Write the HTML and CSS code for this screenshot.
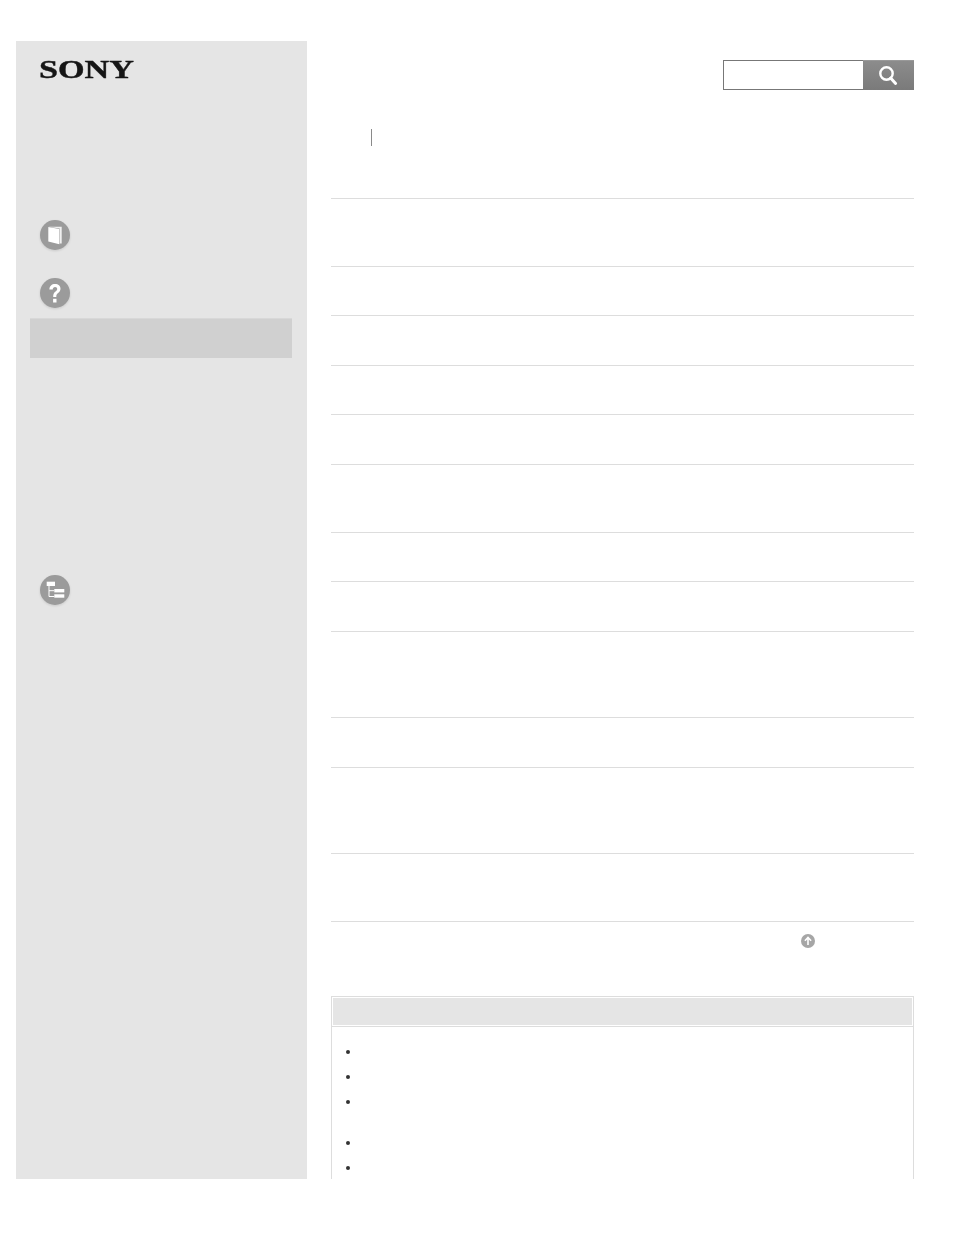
FILE: index.html
```
<!DOCTYPE html>
<html lang="en">
<head>
<meta charset="utf-8">
<title>Help Guide</title>
<link rel="stylesheet" href="styles.css">
</head>
<body>
<div class="page">
  <aside class="sidebar">
    <div class="logo"><span class="logo-text">SONY</span></div>
    <div class="nav-icon nav-book">
      <svg width="32" height="32" viewBox="0 0 32 32"><circle cx="16" cy="16" r="15" fill="#9b9b9b"/><path d="M9.3 7.7h13.4v16.8h-2V9.6z" fill="#fff" opacity=".85"/><path d="M9.3 8l11 2v15.2L9.3 22.6z" fill="#fff"/></svg>
    </div>
    <div class="nav-icon nav-help">
      <svg width="32" height="32" viewBox="0 0 32 32"><circle cx="16" cy="16" r="15" fill="#9b9b9b"/><path d="M10.4 12.4c.1-3.4 2.4-5.4 5.6-5.4 3.3 0 5.5 1.9 5.5 4.8 0 2-1.1 3.2-2.4 4.2-1.3 1-1.8 1.7-1.8 4h-3.1c-.1-3 .7-4.2 2.1-5.3 1.1-.9 1.9-1.5 1.9-2.7 0-1.1-.9-1.9-2.1-1.9-1.4 0-2.3.9-2.4 2.5z" fill="#fff"/><rect x="14.1" y="21.8" width="3.4" height="3.7" fill="#fff"/></svg>
    </div>
    <div class="nav-band"></div>
    <div class="nav-icon nav-tree">
      <svg width="32" height="32" viewBox="0 0 32 32"><circle cx="16" cy="16" r="15" fill="#9b9b9b"/><rect x="7.7" y="7.7" width="8.3" height="4.3" fill="#fff"/><path d="M10 12v10.5h5.3M10 16.7h5.3" stroke="#fff" fill="none"/><rect x="15.3" y="15" width="10" height="3.4" fill="#fff"/><rect x="15.3" y="20.3" width="10" height="3.4" fill="#fff"/></svg>
    </div>
  </aside>
  <main class="content">
    <div class="search">
      <div class="search-input"></div>
      <div class="search-button">
        <svg width="22" height="22" viewBox="0 0 22 22"><circle cx="8.5" cy="8.5" r="6.2" fill="none" stroke="#fff" stroke-width="2.4"/><path d="M12.6 13l5 5.4" stroke="#fff" stroke-width="3" stroke-linecap="round"/></svg>
      </div>
    </div>
    <div class="crumbs"><span class="crumb-sep"></span></div>
    <div class="rows">
      <div class="row row-2"></div>
      <div class="row row-1"></div>
      <div class="row row-1"></div>
      <div class="row row-1"></div>
      <div class="row row-1"></div>
      <div class="row row-2"></div>
      <div class="row row-1"></div>
      <div class="row row-1"></div>
      <div class="row row-3"></div>
      <div class="row row-1"></div>
      <div class="row row-3"></div>
      <div class="row row-2"></div>
    </div>
    <div class="top-link">
      <svg width="14" height="14" viewBox="0 0 14 14"><circle cx="7" cy="7" r="7" fill="#a6a6a6"/><path d="M7 11V3.8M3.9 6.8L7 3.5l3.1 3.3" fill="none" stroke="#fff" stroke-width="1.6"/></svg>
    </div>
    <section class="note">
      <div class="note-head"></div>
      <div class="note-list">
        <div class="bullet"></div>
        <div class="bullet"></div>
        <div class="bullet bullet-tall"></div>
        <div class="bullet"></div>
        <div class="bullet"></div>
      </div>
    </section>
  </main>
</div>
</body>
</html>
```

FILE: styles.css
```
html, body {
  margin: 0;
  padding: 0;
  background: #fff;
  font-family: "Liberation Sans", Arial, sans-serif;
}
.page {
  display: flex;
  align-items: stretch;
  height: 1138px;
  margin: 41px 0 0 16px;
  width: 898px;
  overflow: hidden;
}
.sidebar {
  display: flex;
  flex-direction: column;
  flex: 0 0 291px;
  background: #e5e5e5;
  padding: 17px 15px 0 14px;
  box-sizing: border-box;
}
.logo {
  height: 24px;
  margin-left: 9px;
  line-height: 24px;
}
.logo-text {
  display: inline-block;
  font-family: "Liberation Serif", "Times New Roman", serif;
  font-weight: 700;
  font-size: 25px;
  color: #151515;
  -webkit-text-stroke: .35px #151515;
  transform: scaleX(1.368);
  transform-origin: left center;
}
.nav-icon {
  height: 32px;
  margin-left: 9px;
}
.nav-icon svg {
  display: block;
  filter: drop-shadow(0 1px 1px rgba(0, 0, 0, .12));
}
.nav-book { margin-top: 137px; }
.nav-help { margin-top: 26px; }
.nav-band {
  height: 40px;
  margin-top: 9px;
  background: #d0d0d0;
  border-top: 1px solid #d8d8d8;
  box-sizing: border-box;
}
.nav-tree { margin-top: 216px; }
.content {
  flex: 0 0 583px;
  margin-left: 24px;
  padding-top: 19px;
  box-sizing: border-box;
}
.search {
  display: flex;
  justify-content: flex-end;
  height: 30px;
}
.search-input {
  width: 140px;
  background: #fff;
  border: 1px solid #777;
  border-right: 0;
  box-sizing: border-box;
}
.search-button {
  display: flex;
  align-items: center;
  justify-content: center;
  width: 51px;
  background: linear-gradient(#8c8c8c, #7a7a7a);
  border-top: 1px solid #999;
  box-sizing: border-box;
}
.crumbs {
  height: 18px;
  margin-top: 39px;
  padding-left: 40px;
}
.crumb-sep {
  display: block;
  width: 1px;
  height: 17px;
  background: #8a8a8a;
}
.rows {
  margin-top: 51px;
  border-top: 1px solid #ddd;
}
.row {
  border-bottom: 1px solid #ddd;
  box-sizing: border-box;
}
.row-1 { height: 49.49px; }
.row-2 { height: 68px; }
.row-3 { height: 86.2px; }
.top-link {
  display: flex;
  justify-content: flex-end;
  height: 74px;
  padding: 12px 99px 0 0;
  box-sizing: border-box;
}
.note {
  border: 1px solid #ddd;
  border-bottom: 0;
  padding: 1px 1px 0;
  height: 200px;
  box-sizing: border-box;
}
.note-head {
  height: 27px;
  background: #e5e5e5;
  margin-bottom: 1px;
}
.note-list {
  margin: 0 -1px;
  border-top: 1px solid #ddd;
  padding-top: 23px;
}
.bullet {
  height: 25.3px;
  padding-left: 14px;
  box-sizing: border-box;
}
.bullet::before {
  content: "";
  display: block;
  width: 4px;
  height: 4px;
  border-radius: 50%;
  background: #333;
}
.bullet-tall { height: 40.6px; }
```
